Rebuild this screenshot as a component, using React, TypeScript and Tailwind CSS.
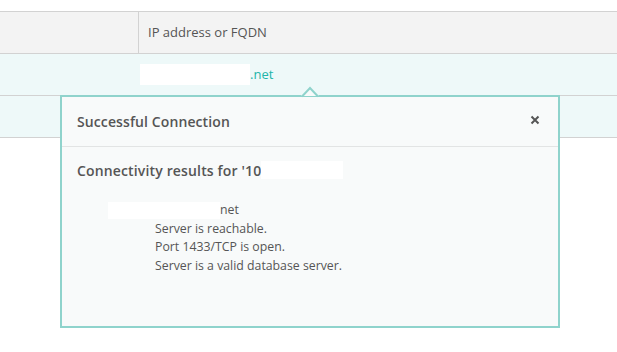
import React from "react";

export default function App() {
  return (
    <div className="relative w-[617px] h-[352px] bg-white overflow-hidden font-['Open_Sans',sans-serif] text-[13px] text-[#555]">
      <div className="h-[11px]" />
      {/* header */}
      <div className="flex h-[43px] border-y border-[#d2d2d2] bg-[#f3f3f3]">
        <div className="w-[139px] border-r border-[#d2d2d2]" />
        <div className="flex items-center pl-[9px] text-[#555]">IP address or FQDN</div>
      </div>
      {/* row 1 */}
      <div className="flex h-[42px] border-b border-[#d2d2d2] bg-[#eef9f9]">
        <div className="w-[139px]" />
        <div className="flex items-center pl-[1px]">
          <span className="inline-block h-[21px] w-[110px] bg-white" />
          <span className="text-[#22b5a9]">.net</span>
        </div>
      </div>
      {/* row 2 */}
      <div className="h-[42px] border-b border-[#d2d2d2] bg-[#eef9f9]" />

      {/* popover */}
      <div className="absolute left-[60px] top-[95px] w-[500px] h-[233px] border-2 border-[#8fd3cc] bg-[#f8fafa]">
        <div className="flex h-[50px] items-center justify-between border-b border-[#e2e4e4] pl-[15px] pr-[18px]">
          <span className="text-[14px] font-semibold tracking-[0.1px] text-[#555]">Successful Connection</span>
          <svg width="10" height="10" viewBox="0 0 10 10" className="mt-[-4px]">
            <path d="M1.5 1.5 L8.5 8.5 M8.5 1.5 L1.5 8.5" stroke="#555" strokeWidth="2" />
          </svg>
        </div>
        <div className="pl-[15px] pt-[14px]">
          <div className="flex items-center h-[18px] text-[14px] font-semibold tracking-[0.15px]">
            <span>Connectivity results for '10</span>
            <span className="inline-block h-[18px] w-[82px] bg-white" />
          </div>
          <div className="mt-[22px] pl-[31px] leading-[18.5px] text-[12.3px]">
            <div className="flex items-center h-[18.5px]">
              <span className="inline-block h-[17px] w-[112px] bg-white" />
              <span>net</span>
            </div>
            <div className="pl-[47px]">
              <div>Server is reachable.</div>
              <div>Port 1433/TCP is open.</div>
              <div>Server is a valid database server.</div>
            </div>
          </div>
        </div>
      </div>
      {/* arrow */}
      <svg className="absolute left-[301px] top-[86px]" width="18" height="12" viewBox="0 0 18 12">
        <path d="M0 10 L9 1.4 L18 10 Z" fill="#f8fafa" />
        <path d="M1 10.5 L9 2 L17 10.5" fill="none" stroke="#8fd3cc" strokeWidth="2" />
      </svg>
    </div>
  );
}
